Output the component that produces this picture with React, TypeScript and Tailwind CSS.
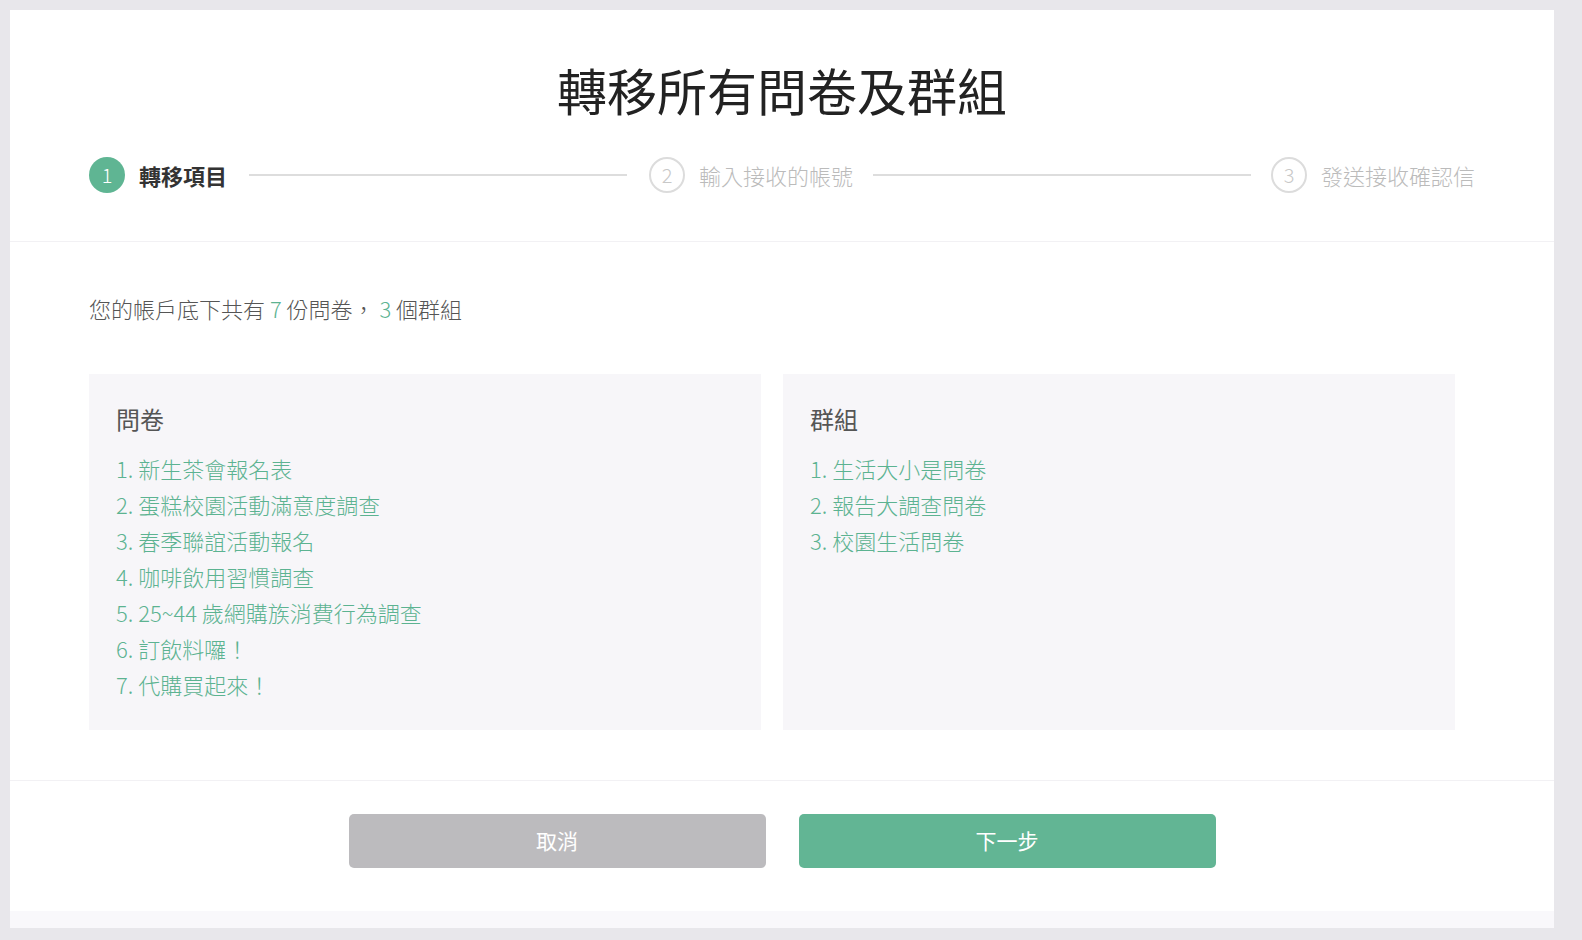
const F = { fontFamily: '"Noto Sans CJK TC", "Noto Sans", sans-serif' };
const G = "text-[#5cb391]";
const surveys = ["新生茶會報名表","蛋糕校園活動滿意度調查","春季聯誼活動報名","咖啡飲用習慣調查","25~44 歲網購族消費行為調查","訂飲料囉！","代購買起來！"];
const groups = ["生活大小是問卷","報告大調查問卷","校園生活問卷"];
function Circle({ n, active }: { n: number; active?: boolean }) {
  return active ? (
    <div className="w-[36px] h-[36px] rounded-full bg-[#5fb593] text-white flex items-center justify-center text-[20px] font-light">{n}</div>
  ) : (
    <div className="w-[36px] h-[36px] rounded-full border-2 border-[#dcdcdc] text-[#c8c8c8] flex items-center justify-center text-[20px] font-light">{n}</div>
  );
}
function Panel({ title, items }: { title: string; items: string[] }) {
  return (
    <div className="flex-1 bg-[#f7f6f9] px-[27px] pt-[28px] h-[356px]">
      <div className="text-[24px] text-[#555] leading-[34px] mb-[14px]">{title}</div>
      {items.map((t, i) => (
        <div key={i} className={`text-[22px] font-light leading-[36px] ${G}`}>{i + 1}. {t}</div>
      ))}
    </div>
  );
}
export default function App() {
  return (
    <div className="w-[1582px] h-[940px] bg-[#e8e7eb] p-[10px] pr-[28px] pb-[12px]" style={F}>
      <div className="bg-white w-[1544px] h-[918px] flex flex-col">
        <div className="text-center text-[50px] text-[#222] pt-[46px] leading-[66px]">轉移所有問卷及群組</div>
        <div className="flex items-center px-[79px] mt-[35px] h-[36px]">
          <Circle n={1} active />
          <span className="ml-[14px] text-[22px] font-bold text-[#333]">轉移項目</span>
          <div className="flex-1 h-[2px] bg-[#ddd] mx-[22px]" />
          <Circle n={2} />
          <span className="ml-[14px] text-[22px] font-light text-[#bbb]">輸入接收的帳號</span>
          <div className="flex-1 h-[2px] bg-[#ddd] mx-[20px]" />
          <Circle n={3} />
          <span className="ml-[14px] text-[22px] font-light text-[#bbb]">發送接收確認信</span>
        </div>
        <div className="mt-[48px] border-t border-[#f2f1f4]" />
        <div className="px-[79px] mt-[50px] text-[22px] font-light text-[#555] leading-[32px]">
          您的帳戶底下共有 <span className={G}>7</span> 份問卷， <span className={G}>3</span> 個群組
        </div>
        <div className="flex gap-[22px] px-[79px] mt-[50px] pr-[99px]">
          <Panel title="問卷" items={surveys} />
          <Panel title="群組" items={groups} />
        </div>
        <div className="mt-[50px] border-t border-[#f2f1f4]" />
        <div className="flex justify-center gap-[33px] mt-[33px]">
          <button className="w-[417px] h-[54px] rounded-[5px] bg-[#bcbbbe] text-white text-[21px]">取消</button>
          <button className="w-[417px] h-[54px] rounded-[5px] bg-[#62b594] text-white text-[21px]">下一步</button>
        </div>
        <div className="flex-1" />
        <div className="h-[17px] bg-[#f9f8fb]" />
      </div>
    </div>
  );
}
